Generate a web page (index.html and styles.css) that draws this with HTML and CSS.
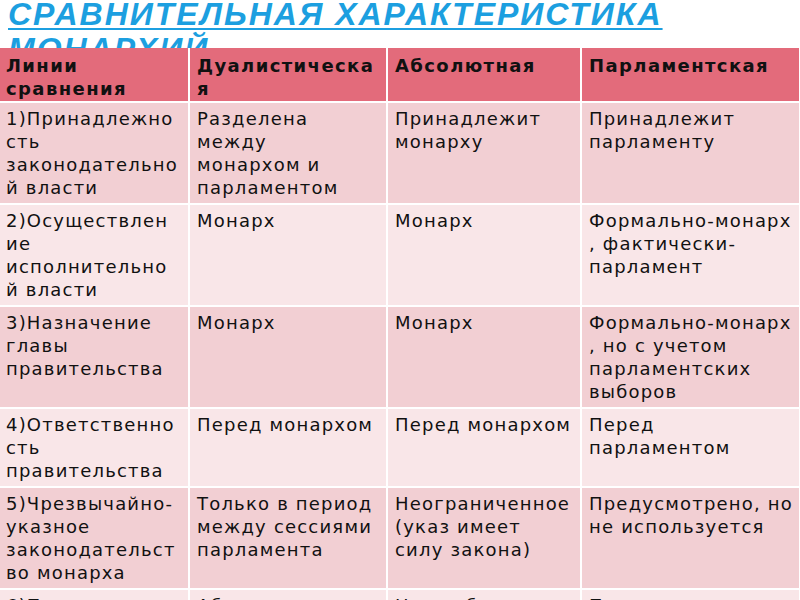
FILE: index.html
```html
<!DOCTYPE html>
<html lang="ru">
<head>
<meta charset="utf-8">
<title>Сравнительная характеристика монархий</title>
<link rel="stylesheet" href="styles.css">
</head>
<body>
<div class="slide">
  <div class="title-box">
    <h1 class="title">СРАВНИТЕЛЬНАЯ ХАРАКТЕРИСТИКА МОНАРХИЙ</h1>
  </div>
  <table class="grid">
    <tr class="head">
      <th class="c1">Линии<br>сравнения</th>
      <th class="c2">Дуалистическа<br>я</th>
      <th class="c3">Абсолютная</th>
      <th class="c4">Парламентская</th>
    </tr>
    <tr class="odd">
      <td>1)Принадлежно<br>сть<br>законодательно<br>й власти</td>
      <td>Разделена<br>между<br>монархом и<br>парламентом</td>
      <td>Принадлежит<br>монарху</td>
      <td>Принадлежит<br>парламенту</td>
    </tr>
    <tr class="even">
      <td>2)Осуществлен<br>ие<br>исполнительно<br>й власти</td>
      <td>Монарх</td>
      <td>Монарх</td>
      <td>Формально-монарх<br>, фактически-<br>парламент</td>
    </tr>
    <tr class="odd">
      <td>3)Назначение<br>главы<br>правительства</td>
      <td>Монарх</td>
      <td>Монарх</td>
      <td>Формально-монарх<br>, но с учетом<br>парламентских<br>выборов</td>
    </tr>
    <tr class="even">
      <td>4)Ответственно<br>сть<br>правительства</td>
      <td>Перед монархом</td>
      <td>Перед монархом</td>
      <td>Перед<br>парламентом</td>
    </tr>
    <tr class="odd">
      <td>5)Чрезвычайно-<br>указное<br>законодательст<br>во монарха</td>
      <td>Только в период<br>между сессиями<br>парламента</td>
      <td>Неограниченное<br>(указ имеет<br>силу закона)</td>
      <td>Предусмотрено, но<br>не используется</td>
    </tr>
    <tr class="even">
      <td>6)Право вето<br>монарха</td>
      <td>Абсолютное</td>
      <td>Не требуется</td>
      <td>Право есть, но<br>не используется</td>
    </tr>
  </table>
</div>
</body>
</html>
```

FILE: styles.css
```css
html, body {
  margin: 0;
  padding: 0;
  background: #ffffff;
}
.slide {
  width: 800px;
  height: 600px;
  overflow: hidden;
}
.title-box {
  height: 48px;
  overflow: hidden;
}
.title {
  margin: -3px 0 0 0;
  padding: 0 0 0 8px;
  font-family: "Liberation Sans", Arial, sans-serif;
  font-weight: bold;
  font-style: italic;
  font-size: 32px;
  line-height: 35px;
  letter-spacing: 2px;
  color: #1c9fe0;
  text-decoration: underline;
  text-decoration-thickness: 2px;
  text-underline-offset: 3px;
  width: 720px;
}
.grid {
  border-collapse: separate;
  border-spacing: 2px;
  margin: -2px 0 0 -2px;
  width: 803px;
  table-layout: fixed;
  font-family: "DejaVu Sans", sans-serif;
  font-size: 18px;
  line-height: 23px;
  color: #111111;
}
.grid th, .grid td {
  box-sizing: border-box;
  text-align: left;
  vertical-align: top;
  white-space: nowrap;
  overflow: hidden;
  padding: 4px 0 4px 7px;
  letter-spacing: 1.2px;
}
.grid td:first-child, .grid th:first-child {
  padding-left: 6px;
}
.c1 { width: 188px; }
.c2 { width: 196px; }
.c3 { width: 192px; }
.head th {
  background: #e36b7b;
  font-weight: bold;
  letter-spacing: 1.4px;
  padding-top: 6px;
  padding-bottom: 1px;
}
.odd td { background: #f2cfd3; }
.even td { background: #f9e6e8; }
```
